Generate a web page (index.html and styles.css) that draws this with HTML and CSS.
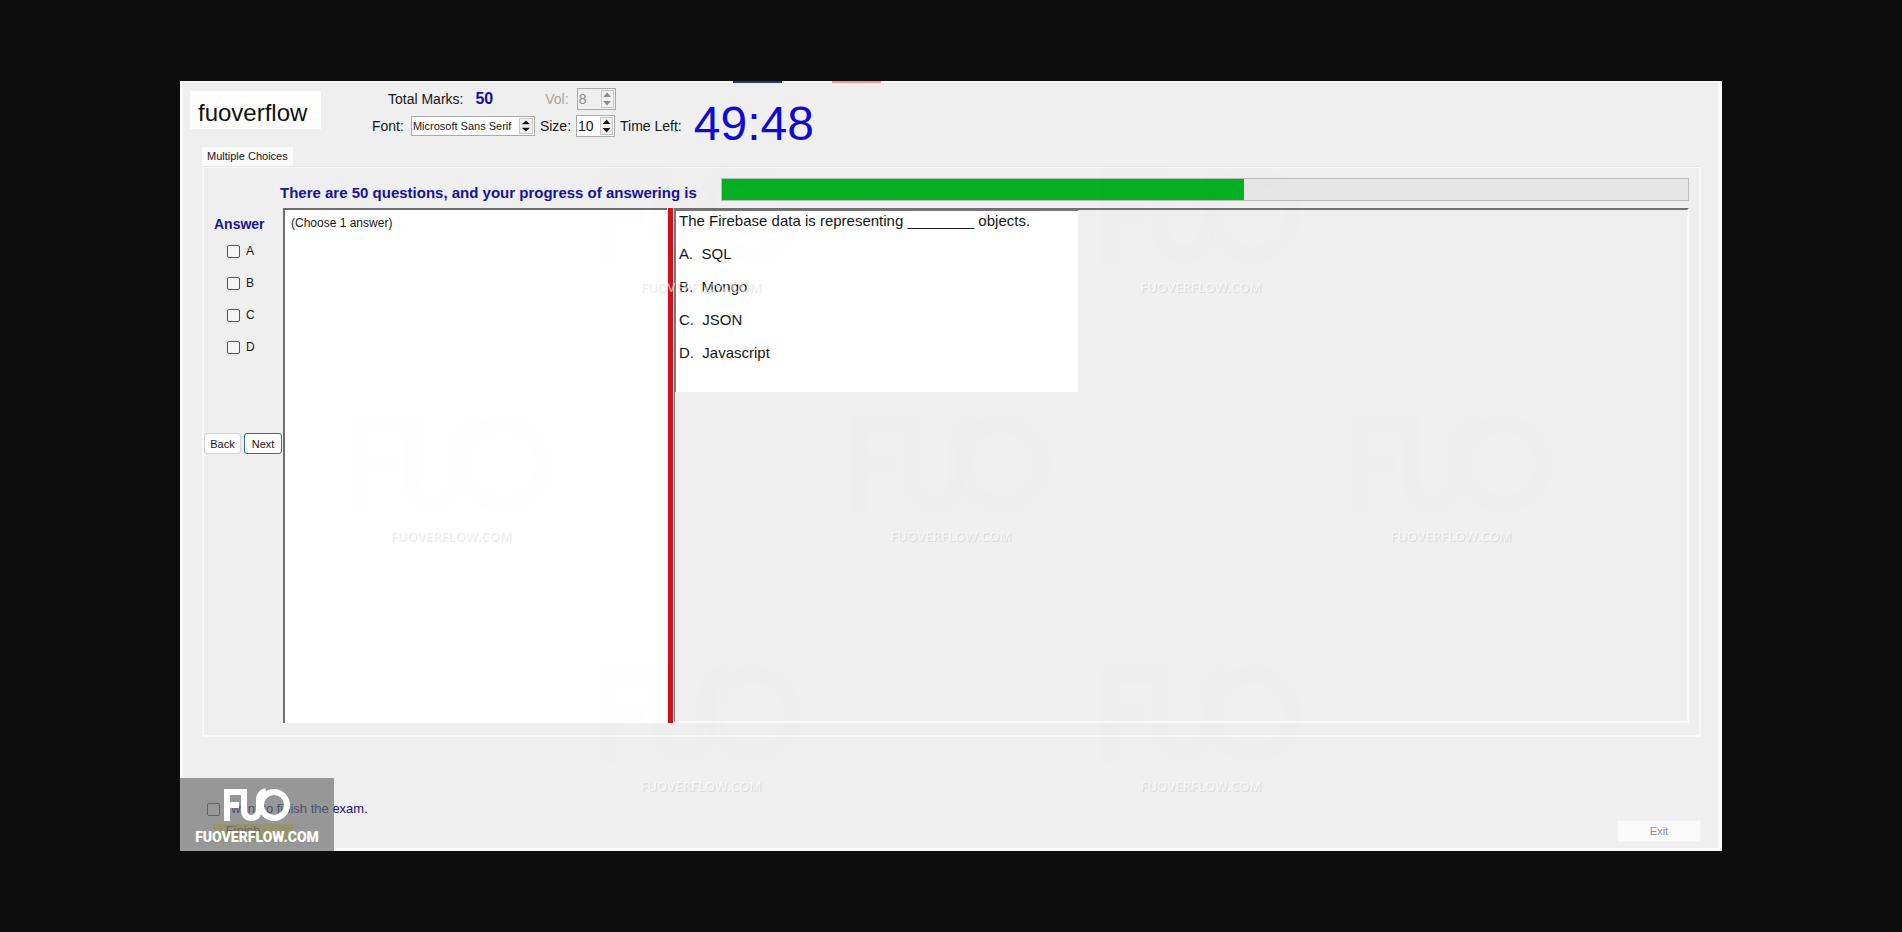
FILE: index.html
```html
<!DOCTYPE html>
<html lang="en">
<head>
<meta charset="utf-8">
<title>Exam</title>
<link rel="stylesheet" href="styles.css">
</head>
<body>
<svg class="defs" aria-hidden="true">
  <symbol id="mark" viewBox="0 0 66 34">
    <path d="M3 33V4H17M3 17H15M20 1V21Q20 30 27.500 30Q35 30 35 20V12Q35 5 42 3" fill="none" stroke="currentColor" stroke-width="6"/>
    <circle cx="50" cy="17" r="13" fill="none" stroke="currentColor" stroke-width="6"/>
  </symbol>
</svg>
<main class="window">
  <header class="top">
    <div class="brand">fuoverflow</div>
    <div class="settings">
      <div class="line line-marks">
        <span>Total Marks:</span><strong class="marks">50</strong>
        <label class="muted" for="vol">Vol:</label>
        <span class="spin muted"><input id="vol" value="8" disabled><span class="arrows"><i></i><i></i></span></span>
      </div>
      <div class="line">
        <label for="font">Font:</label>
        <span class="spin spin-font"><select id="font"><option>Microsoft Sans Serif</option></select><span class="arrows"><i></i><i></i></span></span>
        <label for="size">Size:</label>
        <span class="spin"><input id="size" value="10"><span class="arrows"><i></i><i></i></span></span>
        <span>Time Left:</span>
      </div>
    </div>
    <div class="timer">49:48</div>
    <span class="scrap scrap-blue"></span><span class="scrap scrap-red"></span>
  </header>

  <button class="tab">Multiple Choices</button>
  <section class="panel">
    <div class="progress-row">
      <h1 class="heading">There are 50 questions, and your progress of answering is</h1>
      <div class="progress"><div class="fill" style="width:54%"></div></div>
    </div>
    <div class="work">
      <div class="answers">
        <h2 class="heading">Answer</h2>
        <label class="choice"><input type="checkbox">A</label>
        <label class="choice"><input type="checkbox">B</label>
        <label class="choice"><input type="checkbox">C</label>
        <label class="choice"><input type="checkbox">D</label>
        <div class="nav"><button class="btn">Back</button><button class="btn btn-focus">Next</button></div>
      </div>
      <div class="hint">(Choose 1 answer)</div>
      <div class="divider"></div>
      <div class="viewer">
        <div class="question">
          <p>The Firebase data is representing ________ objects.</p>
          <p>A.&nbsp; SQL</p>
          <p>B.&nbsp; Mongo</p>
          <p>C.&nbsp; JSON</p>
          <p>D.&nbsp; Javascript</p>
        </div>
      </div>
    </div>
  </section>

  <footer class="bottom">
    <div class="finish-area">
      <label class="finish-check"><input type="checkbox">I want to finish the exam.</label>
      <button class="finish" disabled>Finish</button>
    </div>
    <button class="exit" disabled>Exit</button>
  </footer>

  <div class="stamp stamp-1"><svg><use href="#mark"/></svg>FUOVERFLOW.COM</div>
  <div class="stamp stamp-2"><svg><use href="#mark"/></svg>FUOVERFLOW.COM</div>
  <div class="stamp stamp-3"><svg><use href="#mark"/></svg>FUOVERFLOW.COM</div>
  <div class="stamp stamp-4"><svg><use href="#mark"/></svg>FUOVERFLOW.COM</div>
  <div class="stamp stamp-5"><svg><use href="#mark"/></svg>FUOVERFLOW.COM</div>
  <div class="stamp stamp-6"><svg><use href="#mark"/></svg>FUOVERFLOW.COM</div>
  <div class="stamp stamp-7"><svg><use href="#mark"/></svg>FUOVERFLOW.COM</div>
  <div class="badge"><svg><use href="#mark"/></svg><span>FUOVERFLOW.COM</span></div>
</main>
</body>
</html>
```
FILE: styles.css
```css
* { box-sizing: border-box; }
body {
  margin: 0;
  min-height: 100vh;
  padding: 81px 180px;
  display: flex;
  background: #0d0d0d;
  color: #161616;
  font: 14px/16px "Liberation Sans", Arial, sans-serif;
}
h1, h2, p { margin: 0; }
button, input, select { font: inherit; color: inherit; margin: 0; }
.defs { position: absolute; width: 0; height: 0; }
.window {
  position: relative;
  flex: 1;
  display: flex;
  flex-direction: column;
  background: #efefef;
  border: solid #fafafa;
  border-width: 1px 4px 3px 3px;
}

.top { position: relative; display: flex; align-items: flex-start; height: 65px; }
.brand {
  width: 131px;
  height: 38px;
  margin: 9px 0 0 7px;
  padding-left: 8px;
  background: #fff;
  color: #111;
  font-size: 24px;
  line-height: 43px;
}
.settings { margin: 5px 0 0 51px; }
.line { display: flex; align-items: center; gap: 5px; height: 24px; margin-bottom: 3px; }
.line-marks { padding-left: 16px; gap: 12px; }
.marks { color: #10109c; font-size: 16px; margin-right: 40px; }
.muted { color: #a3a3a3; }
.line-marks .spin { margin-left: -4px; }
.spin { display: flex; width: 39px; height: 22px; background: #fff; border: 1px solid #a9a9a9; }
.spin.muted { background: #efefef; color: #8a8a8a; }
.spin input { width: 22px; padding: 0 0 0 1px; border: 0; background: none; }
.spin-font { width: 124px; height: 20px; margin-left: 2px; }
.spin select { flex: 1; width: 100px; padding: 0 0 0 1px; border: 0; background: none; appearance: none; font-size: 11px; line-height: 16px; }
.arrows { display: flex; flex-direction: column; width: 14px; margin: 1px; border: 1px solid #c9c9c9; background: #f1f1f1; }
.arrows i { flex: 1; background: currentColor; clip-path: polygon(50% 20%, 85% 75%, 15% 75%); }
.arrows i + i { clip-path: polygon(15% 25%, 85% 25%, 50% 80%); }
.timer { margin: 15px 0 0 12px; color: #1208cf; font-size: 48px; line-height: 54px; }
.scrap { position: absolute; top: -1px; left: 550px; width: 49px; height: 2px; background: #223a78; }
.scrap-red { left: 649px; background: #f29a9a; }

.tab {
  align-self: flex-start;
  height: 20px;
  margin-left: 19px;
  padding: 0 5px 2px;
  border: 0;
  background: #fafafa;
  font-size: 11px;
}
.panel {
  flex: 1;
  display: flex;
  flex-direction: column;
  margin: 0 17px 0 19px;
  padding: 10px 10px 12px 0;
  border: 2px solid #f8f8f8;
  border-top-width: 1px;
  box-shadow: 0 -1px #e4e4e4;
}
.heading { color: #17129a; font-size: 15px; line-height: 16px; font-weight: bold; }
.progress-row { display: flex; height: 30px; padding-left: 76px; }
.progress-row .heading { padding: 7px 24px 0 0; }
.progress { flex: 1; height: 23px; border: 1px solid #bcbcbc; background: #e6e6e6; }
.fill { height: 100%; background: #06b025; }
.work { flex: 1; display: flex; }
.answers { width: 79px; }
.answers .heading { padding: 8px 0 0 10px; font-size: 14px; }
.choice { display: flex; align-items: center; gap: 6px; height: 32px; padding-left: 23px; font-size: 12px; }
.answers .heading + .choice { margin-top: 3px; }
input[type="checkbox"] { appearance: none; width: 13px; height: 13px; border: 1px solid #555; border-radius: 2px; background: #f6f6f6; }
.nav { display: flex; gap: 3px; margin-top: 70px; }
.btn { width: 37px; height: 21px; padding: 0; border: 1px solid #d4d4d4; border-radius: 3px; background: #fcfcfc; font-size: 11px; }
.btn-focus { width: 38px; border-color: #2f7684; }
.hint { flex: 0 0 384px; padding: 5px 6px; border: solid #6d6d6d; border-width: 2px 0 0 2px; background: #fff; font-size: 12px; }
.divider { width: 5px; margin: 0 1px; background: #d2101a; }
.viewer { flex: 1; border-top: 2px solid #707070; border-left: 1px solid #777; border-right: 2px solid #fafafa; border-bottom: 2px solid #fafafa; }
.question { width: 403px; height: 182px; padding-left: 3px; border: solid #777; border-width: 1px 0 0 1px; background: #fff; font-size: 15px; }
.question p { line-height: 19px; margin-bottom: 14px; }

.bottom { display: flex; justify-content: space-between; align-items: flex-end; height: 111px; padding: 0 17px 6px 24px; }
.finish-area { display: flex; flex-direction: column; }
.finish-check { display: flex; align-items: center; gap: 4px; color: #1b1280; font-size: 13px; }
.finish { align-self: flex-start; margin-left: 6px; width: 80px; height: 18px; margin-top: 7px; padding: 0 20px 4px 0; border: 0; background: #e6e67c; color: #555; font-size: 13px; line-height: 14px; }
.exit { width: 84px; height: 22px; border: 1px solid #f3f3f3; background: #fafafa; color: #8c8c8c; font-size: 11px; }

.stamp {
  position: absolute;
  width: 210px;
  text-align: center;
  color: rgba(255, 255, 255, .6);
  text-shadow: 1px 1px 1px rgba(0, 0, 0, .1);
  font: 600 13px/16px "Open Sans", sans-serif;
  pointer-events: none;
}
.stamp svg { display: block; width: 210px; height: 104px; margin-bottom: 12px; color: rgba(0, 0, 0, .005); }
.stamp-1 { left: 413px; top: 81px; }
.stamp-2 { left: 913px; top: 81px; }
.stamp-3 { left: 163px; top: 330px; }
.stamp-4 { left: 663px; top: 330px; }
.stamp-5 { left: 1163px; top: 330px; }
.stamp-6 { left: 413px; top: 580px; }
.stamp-7 { left: 913px; top: 580px; }
.badge {
  position: absolute;
  left: -3px;
  bottom: -3px;
  width: 154px;
  height: 73px;
  display: flex;
  flex-direction: column;
  align-items: center;
  padding-top: 10px;
  background: rgba(105, 105, 105, .66);
  color: #fff;
  font: 900 14px/16px Roboto, sans-serif;
}
.badge svg { width: 66px; height: 34px; margin-bottom: 7px; }
```
